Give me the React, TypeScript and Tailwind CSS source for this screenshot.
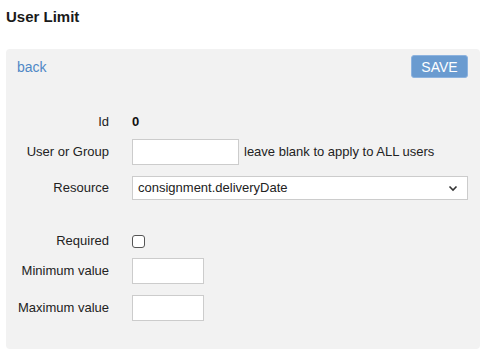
import React from 'react';

const Row: React.FC<{ label: string; className?: string; children: React.ReactNode }> = ({ label, className, children }) => (
  <div className={`flex items-center ${className || ''}`}>
    <div className="w-[92px] shrink-0 text-right text-[#222]">{label}</div>
    <div className="ml-[23px] flex items-center">{children}</div>
  </div>
);

export default function App() {
  return (
    <div className="w-[491px] h-[355px] bg-white text-[13px] leading-[16px] text-[#222]" style={{ fontFamily: '"Liberation Sans", Arial, sans-serif' }}>
      <h1 className="pt-[8px] pl-[6px] text-[15px] leading-[18px] font-bold text-[#1a1a1a]">User Limit</h1>

      <div className="ml-[6px] mt-[23px] w-[474px] h-[300px] bg-[#f2f2f2] rounded-[4px] pt-[6px] pl-[11px] pr-[12px]">
        <div className="flex items-center justify-between h-[23px]">
          <a className="text-[#4f88c6] text-[14px] cursor-pointer">back</a>
          <button className="w-[57px] h-[23px] bg-[#6a9bd0] border border-[#8db3df] rounded-[3px] text-white text-[14px] leading-none">
            SAVE
          </button>
        </div>

        <Row label="Id" className="mt-[36px] h-[16px]">
          <span className="text-[#111] font-bold">0</span>
        </Row>

        <Row label="User or Group" className="mt-[9px] h-[26px]">
          <input className="w-[107px] h-[26px] bg-white border border-[#cccccc] outline-none px-1" />
          <span className="ml-[5px]">leave blank to apply to ALL users</span>
        </Row>

        <Row label="Resource" className="mt-[11px] h-[24px]">
          <div className="w-[336px] h-[24px] bg-white border border-[#cccccc] flex items-center justify-between pl-[5px] pr-[9px] text-[#222]">
            <span>consignment.deliveryDate</span>
            <svg width="10" height="7" viewBox="0 0 10 7" fill="none">
              <path d="M1.5 1.5 L5 5 L8.5 1.5" stroke="#333" strokeWidth="1.6" />
            </svg>
          </div>
        </Row>

        <Row label="Required" className="mt-[28px] h-[26px]">
          <div className="w-[13px] h-[13px] border border-[#555] rounded-[3px] bg-white" />
        </Row>

        <Row label="Minimum value" className="mt-[4px] h-[26px]">
          <input className="w-[72px] h-[26px] bg-white border border-[#cccccc] outline-none px-1" />
        </Row>

        <Row label="Maximum value" className="mt-[11px] h-[26px]">
          <input className="w-[72px] h-[26px] bg-white border border-[#cccccc] outline-none px-1" />
        </Row>
      </div>
    </div>
  );
}
